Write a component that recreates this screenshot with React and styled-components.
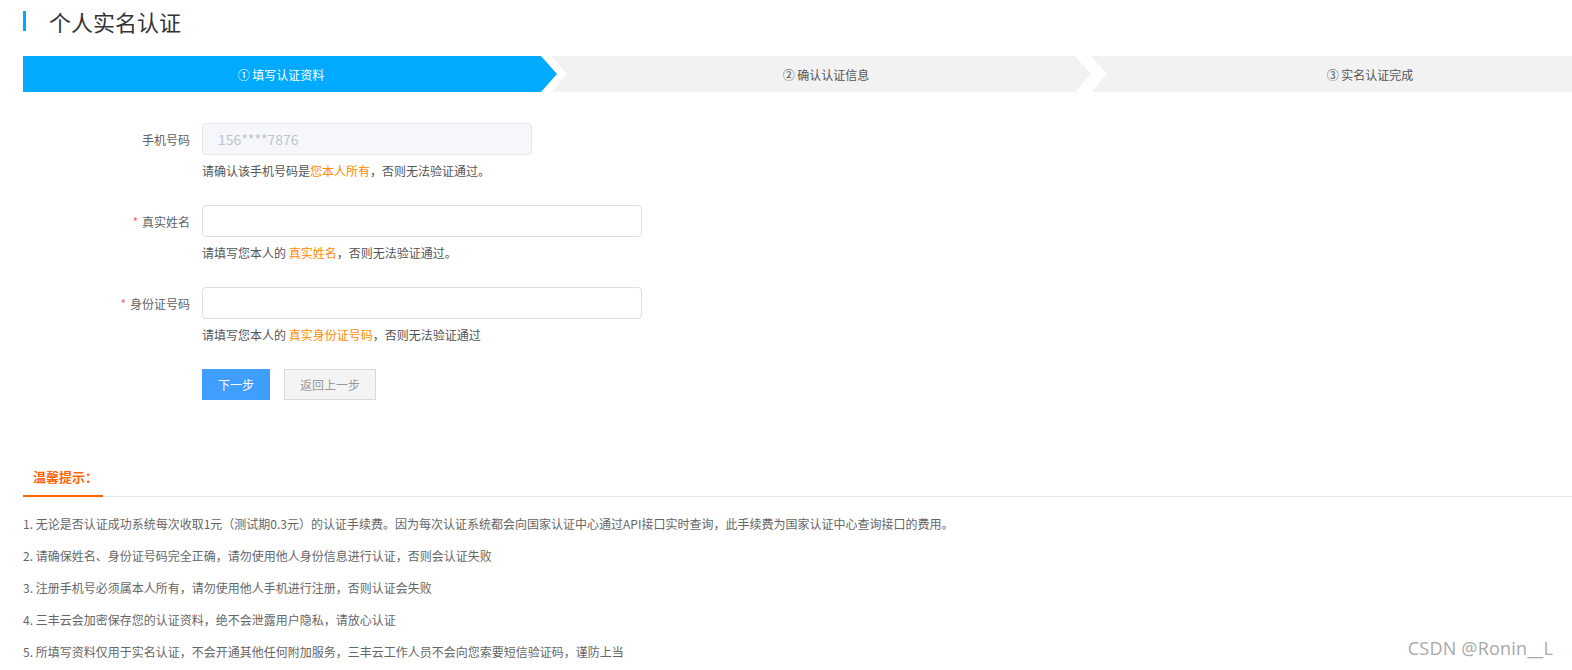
import styled, { createGlobalStyle } from 'styled-components';

const GlobalStyle = createGlobalStyle`
  html, body {
    margin: 0;
    padding: 0;
    overflow: hidden;
    background: #fff;
  }
  body {
    font-family: "Noto Sans CJK SC", "Microsoft YaHei", "Noto Sans", sans-serif;
    color: #333;
  }
`;

const Page = styled.div`
  position: relative;
  width: 1572px;
  height: 670px;
  overflow: hidden;
`;

const Inner = styled.div`
  padding-left: 23px;
  width: 1626px;
`;

const Header = styled.div`
  margin-top: 11px;
  height: 20px;
  display: flex;
  align-items: center;
  border-left: 3px solid #00a6ff;
  padding-left: 23px;

  h1 {
    margin: 0;
    font-size: 22px;
    font-weight: 400;
    line-height: 20px;
    color: #333;
  }
`;

const Steps = styled.div`
  margin-top: 25px;
  height: 36px;
  display: flex;
`;

const Step = styled.div`
  flex: ${(p) => (p.$grow ? 1 : 'none')};
  width: ${(p) => (p.$width ? `${p.$width}px` : 'auto')};
  margin-left: ${(p) => p.$offset || 0}px;
  background: ${(p) => (p.$active ? '#00aaff' : '#f2f2f2')};
  color: ${(p) => (p.$active ? '#fff' : '#555')};
  font-size: 12px;
  display: flex;
  align-items: center;
  justify-content: center;
  padding: ${(p) => p.$pad || '0'};
  box-sizing: border-box;
  clip-path: ${(p) =>
    p.$first
      ? 'polygon(0 0, calc(100% - 16px) 0, 100% 50%, calc(100% - 16px) 100%, 0 100%)'
      : p.$last
      ? 'polygon(0 0, 100% 0, 100% 100%, 0 100%, 16px 50%)'
      : 'polygon(0 0, calc(100% - 16px) 0, 100% 50%, calc(100% - 16px) 100%, 0 100%, 16px 50%)'};
`;

const Form = styled.div`
  margin-top: 31px;
`;

const Row = styled.div`
  display: flex;
  margin-bottom: 26px;
`;

const Label = styled.label`
  width: 167px;
  padding-right: 12px;
  height: 32px;
  display: flex;
  align-items: center;
  justify-content: flex-end;
  font-size: 12px;
  color: #606266;

  span {
    color: #f56c6c;
    margin-right: 4px;
  }
`;

const Field = styled.div`
  display: flex;
  flex-direction: column;
`;

const Input = styled.input`
  box-sizing: border-box;
  width: ${(p) => p.$width}px;
  height: 32px;
  border: 1px solid ${(p) => (p.disabled ? '#e4e7ed' : '#dcdfe6')};
  background: ${(p) => (p.disabled ? '#f5f7fa' : '#fff')};
  border-radius: 4px;
  padding: 0 15px;
  font-size: 14px;
  font-family: inherit;
  color: #c0c4cc;
  outline: none;

  &:disabled {
    color: #c0c4cc;
  }
`;

const Hint = styled.p`
  margin: 8px 0 0;
  font-size: 12px;
  line-height: 16px;
  color: #555;

  em {
    font-style: normal;
    color: #ff8a00;
  }
`;

const Buttons = styled.div`
  display: flex;
  gap: 14px;
  padding-left: 179px;
`;

const Button = styled.button`
  box-sizing: border-box;
  height: 31px;
  width: ${(p) => p.$width}px;
  border: 1px solid ${(p) => (p.$primary ? '#409eff' : '#d9d9d9')};
  background: ${(p) => (p.$primary ? '#409eff' : '#f4f4f4')};
  color: ${(p) => (p.$primary ? '#fff' : '#999')};
  font-size: 12px;
  font-family: inherit;
  padding: 0;
  cursor: pointer;
`;

const Tips = styled.div`
  margin-top: 59px;
`;

const TabBar = styled.div`
  display: flex;
  border-bottom: 1px solid #e4e7ed;
`;

const Tab = styled.div`
  padding: 8px 5px 8px 10px;
  line-height: 20px;
  font-size: 13px;
  font-weight: 700;
  color: #ff6600;
  white-space: nowrap;
  border-bottom: 2px solid #ff6600;
  margin-bottom: -1px;
`;

const TipList = styled.ol`
  margin: 0;
  padding: 11px 0 0;
  list-style: none;
`;

const TipItem = styled.li`
  font-size: 12px;
  line-height: 32px;
  color: #666;
`;

const Watermark = styled.div`
  position: absolute;
  right: 19px;
  bottom: 10px;
  font-family: "Open Sans", "Noto Sans", sans-serif;
  font-size: 18px;
  color: #a8a8a8;
  letter-spacing: 0.2px;
`;

const tips = [
  '1. 无论是否认证成功系统每次收取1元（测试期0.3元）的认证手续费。因为每次认证系统都会向国家认证中心通过API接口实时查询，此手续费为国家认证中心查询接口的费用。',
  '2. 请确保姓名、身份证号码完全正确，请勿使用他人身份信息进行认证，否则会认证失败',
  '3. 注册手机号必须属本人所有，请勿使用他人手机进行注册，否则认证会失败',
  '4. 三丰云会加密保存您的认证资料，绝不会泄露用户隐私，请放心认证',
  '5. 所填写资料仅用于实名认证，不会开通其他任何附加服务，三丰云工作人员不会向您索要短信验证码，谨防上当',
];

export default function App() {
  return (
    <Page>
      <GlobalStyle />
      <Inner>
        <Header>
          <h1>个人实名认证</h1>
        </Header>

        <Steps>
          <Step $first $active $width={534} $pad="0 18px 0 0">
            ① 填写认证资料
          </Step>
          <Step $width={540} $offset={-6} $pad="0 0 0 10px">
            ② 确认认证信息
          </Step>
          <Step $last $grow $offset={0}>
            ③ 实名认证完成
          </Step>
        </Steps>

        <Form>
          <Row>
            <Label>手机号码</Label>
            <Field>
              <Input $width={330} disabled value="156****7876" readOnly />
              <Hint>
                请确认该手机号码是<em>您本人所有</em>，否则无法验证通过。
              </Hint>
            </Field>
          </Row>
          <Row>
            <Label>
              <span>*</span>真实姓名
            </Label>
            <Field>
              <Input $width={440} />
              <Hint>
                请填写您本人的 <em>真实姓名</em>，否则无法验证通过。
              </Hint>
            </Field>
          </Row>
          <Row>
            <Label>
              <span>*</span>身份证号码
            </Label>
            <Field>
              <Input $width={440} />
              <Hint>
                请填写您本人的 <em>真实身份证号码</em>，否则无法验证通过
              </Hint>
            </Field>
          </Row>
          <Buttons>
            <Button $primary $width={68}>下一步</Button>
            <Button $width={92}>返回上一步</Button>
          </Buttons>
        </Form>

        <Tips>
          <TabBar>
            <Tab>温馨提示：</Tab>
          </TabBar>
          <TipList>
            {tips.map((t) => (
              <TipItem key={t}>{t}</TipItem>
            ))}
          </TipList>
        </Tips>
      </Inner>
      <Watermark>CSDN @Ronin__L</Watermark>
    </Page>
  );
}
